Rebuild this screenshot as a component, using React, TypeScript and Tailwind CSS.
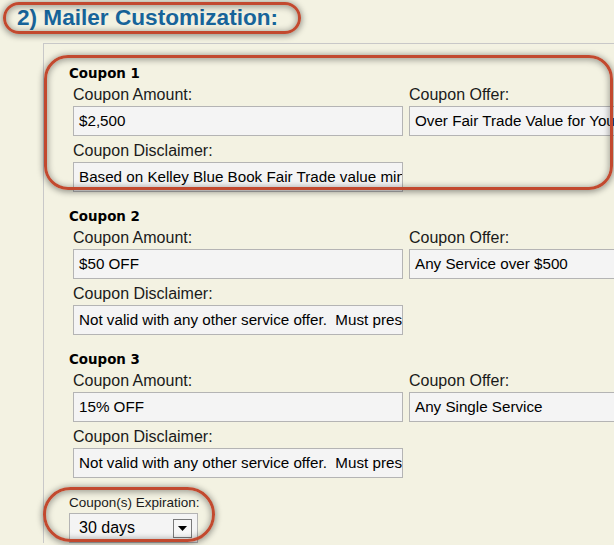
const coupons = [
  {
    title: "Coupon 1",
    amount: "$2,500",
    offer: "Over Fair Trade Value for Your Trade-In",
    disclaimer: "Based on Kelley Blue Book Fair Trade value minus reconditioning",
  },
  {
    title: "Coupon 2",
    amount: "$50 OFF",
    offer: "Any Service over $500",
    disclaimer: "Not valid with any other service offer.  Must present coupon at time of write-up.",
  },
  {
    title: "Coupon 3",
    amount: "15% OFF",
    offer: "Any Single Service",
    disclaimer: "Not valid with any other service offer.  Must present coupon at time of write-up.",
  },
];

const Field = ({ label, value }: { label: string; value: string }) => (
  <div className="w-[330px]">
    <div className="text-[16px] leading-[18px] text-[#1a1a1a] mb-[2px]">{label}</div>
    <div className="h-[30px] border border-[#b4b4b4] bg-[#f4f4f4] px-[5px] text-[15.2px] leading-[28px] text-black whitespace-pre overflow-hidden">
      {value}
    </div>
  </div>
);

const Highlight = ({ className }: { className: string }) => (
  <div
    className={
      "absolute border-[3px] border-[#c2492f] shadow-[0_1px_6px_1px_rgba(0,0,0,0.4),inset_0_1px_6px_1px_rgba(0,0,0,0.35)] pointer-events-none " +
      className
    }
  />
);

export default function App() {
  return (
    <div className="relative w-[614px] h-[545px] overflow-hidden bg-[#f3f2e2] font-['Liberation_Sans',Arial,sans-serif]">
      <h2 className="ml-[17px] pt-[5px] text-[22.6px] leading-[25px] font-bold text-[#17649a]">
        2) Mailer Customization:
      </h2>

      <div className="ml-[43px] mt-[13px] w-[720px] border-l border-t border-[#c8c8c8] pl-[25px] pt-[22px]">
        {coupons.map((c) => (
          <div key={c.title} className="mb-[17px]">
            <div className="font-['DejaVu_Sans',Verdana,sans-serif] text-[13.4px] leading-[15px] font-bold text-black mb-[5px]">
              {c.title}
            </div>
            <div className="ml-[4px] flex gap-[6px]">
              <Field label="Coupon Amount:" value={c.amount} />
              <Field label="Coupon Offer:" value={c.offer} />
            </div>
            <div className="ml-[4px] mt-[6px]">
              <Field label="Coupon Disclaimer:" value={c.disclaimer} />
            </div>
          </div>
        ))}

        <div className="mt-[5px]">
          <div className="text-[13.5px] leading-[16px] text-[#1a1a1a] mb-[2px]">Coupon(s) Expiration:</div>
          <div className="w-[129px] h-[30px] border border-[#b4b4b4] bg-[#f4f4f4] flex justify-between">
            <span className="pl-[9px] text-[16px] leading-[28px] text-black">30 days</span>
            <div className="mt-[5px] mr-[5px] w-[19px] h-[19px] border border-[#7a7a7a] bg-[#f6f6f6] flex items-center justify-center">
              <svg width="9" height="5" viewBox="0 0 9 5">
                <path d="M0 0h9L4.5 5z" fill="#000" />
              </svg>
            </div>
          </div>
        </div>
      </div>

      <Highlight className="left-[3px] top-[2px] w-[298px] h-[32px] rounded-full" />
      <Highlight className="left-[44px] top-[55px] w-[569px] h-[135px] rounded-[24px]" />
      <Highlight className="left-[43px] top-[487px] w-[172px] h-[55px] rounded-[28px]" />
    </div>
  );
}
